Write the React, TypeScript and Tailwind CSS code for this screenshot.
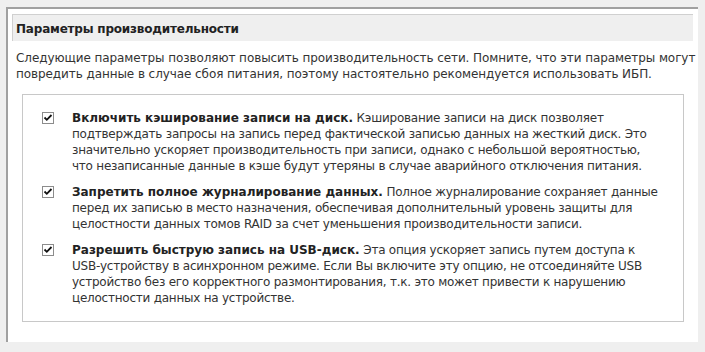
function Check() {
  return (
    <span className="block w-[12px] h-[12px] border border-[#8c8c8c] bg-white relative">
      <svg width="10" height="10" viewBox="0 0 10 10" className="absolute left-0 top-0">
        <path d="M1.5 4.5 L3.8 6.8 L8.5 2" fill="none" stroke="#111" strokeWidth="1.8" />
      </svg>
    </span>
  );
}

function Option({ title, lines }: { title: string; lines: string[] }) {
  return (
    <div className="flex">
      <div className="w-[30px] pt-[2px] shrink-0"><Check /></div>
      <p className="whitespace-nowrap tracking-[-0.24px]">
        <b className="text-[#222] tracking-[0px]">{title}</b> {lines[0]}
        {lines.slice(1).map((l, i) => (
          <span key={i}><br />{l}</span>
        ))}
      </p>
    </div>
  );
}

export default function App() {
  return (
    <div className="w-[705px] h-[352px] bg-[#efefef] pt-[7px] pl-[6px] overflow-hidden tracking-[-0.08px]" style={{ fontFamily: '"DejaVu Sans", Verdana, sans-serif' }}>
      <div className="w-[692px] h-[335px] bg-white border-t-2 border-l-2 border-[#a0a0a0] pt-[5px] pl-[4px]">
        <div className="w-[681px] h-[27px] bg-[#efefef] border-t border-l border-[#d0d0d0] flex items-center pl-[3px] pt-[1px] text-[12px] font-bold text-[#222] tracking-[-0.2px]">
          Параметры производительности
        </div>
        <div className="pl-[4px] pt-[9px] text-[12px] leading-[16px] text-[#333]">
          <p className="whitespace-nowrap">Следующие параметры позволяют повысить производительность сети. Помните, что эти параметры могут</p>
          <p className="whitespace-nowrap">повредить данные в случае сбоя питания, поэтому настоятельно рекомендуется использовать ИБП.</p>
        </div>
        <div className="ml-[10px] mt-[12px] w-[662px] h-[228px] border border-[#c8c8c8] pt-[15px] pl-[19px] text-[12px] leading-[16px] text-[#333] flex flex-col gap-[10px]">
          <Option
            title="Включить кэширование записи на диск."
            lines={[
              "Кэширование записи на диск позволяет",
              "подтверждать запросы на запись перед фактической записью данных на жесткий диск. Это",
              "значительно ускоряет производительность при записи, однако с небольшой вероятностью,",
              "что незаписанные данные в кэше будут утеряны в случае аварийного отключения питания.",
            ]}
          />
          <Option
            title="Запретить полное журналирование данных."
            lines={[
              "Полное журналирование сохраняет данные",
              "перед их записью в место назначения, обеспечивая дополнительный уровень защиты для",
              "целостности данных томов RAID за счет уменьшения производительности записи.",
            ]}
          />
          <Option
            title="Разрешить быструю запись на USB-диск."
            lines={[
              "Эта опция ускоряет запись путем доступа к",
              "USB-устройству в асинхронном режиме. Если Вы включите эту опцию, не отсоединяйте USB",
              "устройство без его корректного размонтирования, т.к. это может привести к нарушению",
              "целостности данных на устройстве.",
            ]}
          />
        </div>
      </div>
    </div>
  );
}
